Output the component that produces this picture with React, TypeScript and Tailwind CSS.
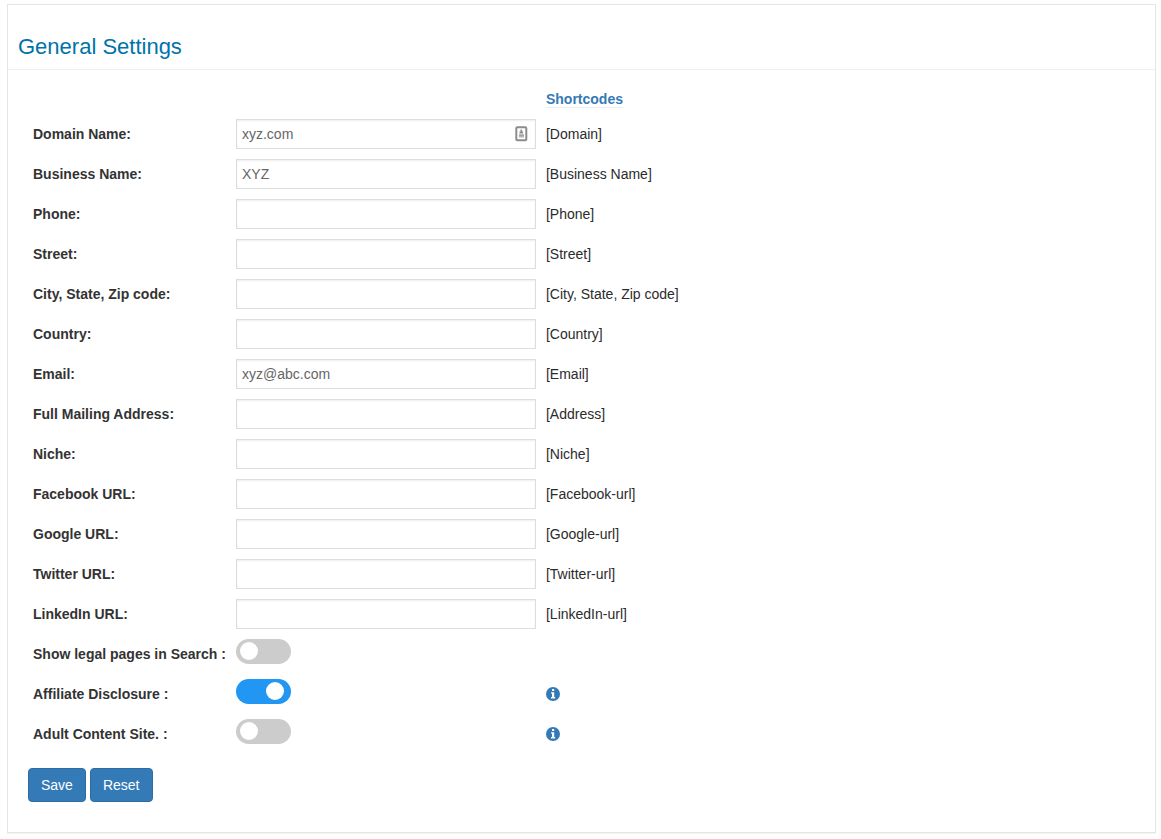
import { useState } from 'react'

const fields = [
  { id: 'domain', label: 'Domain Name:', value: 'xyz.com', shortcode: '[Domain]', autofill: true },
  { id: 'business', label: 'Business Name:', value: 'XYZ', shortcode: '[Business Name]' },
  { id: 'phone', label: 'Phone:', value: '', shortcode: '[Phone]' },
  { id: 'street', label: 'Street:', value: '', shortcode: '[Street]' },
  { id: 'city', label: 'City, State, Zip code:', value: '', shortcode: '[City, State, Zip code]' },
  { id: 'country', label: 'Country:', value: '', shortcode: '[Country]' },
  { id: 'email', label: 'Email:', value: 'xyz@abc.com', shortcode: '[Email]' },
  { id: 'address', label: 'Full Mailing Address:', value: '', shortcode: '[Address]' },
  { id: 'niche', label: 'Niche:', value: '', shortcode: '[Niche]' },
  { id: 'facebook', label: 'Facebook URL:', value: '', shortcode: '[Facebook-url]' },
  { id: 'google', label: 'Google URL:', value: '', shortcode: '[Google-url]' },
  { id: 'twitter', label: 'Twitter URL:', value: '', shortcode: '[Twitter-url]' },
  { id: 'linkedin', label: 'LinkedIn URL:', value: '', shortcode: '[LinkedIn-url]' },
]

const toggles = [
  { id: 'legal', label: 'Show legal pages in Search :', on: false, info: false },
  { id: 'affiliate', label: 'Affiliate Disclosure :', on: true, info: true },
  { id: 'adult', label: 'Adult Content Site. :', on: false, info: true },
]

function AutofillIcon() {
  return (
    <svg className="absolute right-2 top-[7px]" width="13" height="16" viewBox="0 0 13 16" aria-hidden="true">
      <rect x="1.3" y="1.3" width="10" height="13" rx="1" fill="#fff" stroke="#8c8c8c" strokeWidth="2" />
      <path d="M5.500 3.500h1.600v2h1v2H4.500v-2h1z" fill="#8c8c8c" />
      <path d="M4 8.500h5v3H4z" fill="#b5b5b5" />
      <path d="M4 9h5" stroke="#9a9a9a" strokeWidth="1" />
    </svg>
  )
}

function InfoIcon() {
  return (
    <svg width="14" height="14" viewBox="0 0 14 14" aria-hidden="true">
      <circle cx="7" cy="7" r="7" fill="#337ab7" />
      <path d="M6 2h2.200v2H6zM5 5.200h3.200V10H9.200v1.500H5V10h1V6.600H5z" fill="#fff" />
    </svg>
  )
}

function Switch({ id, defaultOn }: { id: string; defaultOn: boolean }) {
  const [on, setOn] = useState(defaultOn)

  return (
    <span className={`flex h-[25px] w-[55px] rounded-full px-1 pt-[3px] ${on ? 'bg-[#2196f3]' : 'bg-[#ccc]'}`}>
      <input
        id={id}
        type="checkbox"
        role="switch"
        checked={on}
        onChange={(e) => setOn(e.target.checked)}
        className="h-[18px] w-full cursor-pointer appearance-none before:block before:size-[18px] before:rounded-full before:bg-white checked:before:translate-x-[26px]"
      />
    </span>
  )
}

export default function App() {
  return (
    <main className="bg-white pt-1 pr-[5px] pb-1.5 pl-[7px] font-['Liberation_Sans',Arial,sans-serif] text-sm leading-5 text-[#333]">
      <form
        className="border border-[#e5e5e5] bg-white shadow-[0_1px_1px_rgba(0,0,0,0.04)]"
        onSubmit={(e) => e.preventDefault()}
      >
        <h1 className="border-b border-[#eee] px-2.5 pt-7 pb-2 text-[22px] leading-7 text-[#0073aa]">
          General Settings
        </h1>

        <div className="px-5 pt-3.5 pb-[30px]">
          <table className="border-collapse text-left">
            <thead>
              <tr>
                <td />
                <td />
                <th className="p-[5px]">
                  <a href="#shortcodes" className="border-b border-[#eee] text-[#337ab7]">
                    Shortcodes
                  </a>
                </th>
              </tr>
            </thead>
            <tbody>
              {fields.map((field) => (
                <tr key={field.id}>
                  <th className="p-[5px] whitespace-nowrap">
                    <label htmlFor={field.id}>{field.label}</label>
                  </th>
                  <td className="p-[5px]">
                    <div className="relative">
                      <input
                        id={field.id}
                        type="text"
                        defaultValue={field.value}
                        className="block h-[30px] w-[300px] border border-[#ddd] bg-white px-[5px] text-[#666] shadow-[inset_0_1px_2px_rgba(0,0,0,0.07)]"
                      />
                      {field.autofill && <AutofillIcon />}
                    </div>
                  </td>
                  <td className="p-[5px] whitespace-nowrap text-[#2b2b2b]">{field.shortcode}</td>
                </tr>
              ))}
              {toggles.map((toggle) => (
                <tr key={toggle.id} className="h-10">
                  <th className="p-[5px] whitespace-nowrap">
                    <label htmlFor={toggle.id}>{toggle.label}</label>
                  </th>
                  <td className="p-[5px] align-top">
                    <Switch id={toggle.id} defaultOn={toggle.on} />
                  </td>
                  <td className="p-[5px]">
                    {toggle.info && (
                      <a href={`#${toggle.id}-info`} aria-label="More information" className="block w-fit">
                        <InfoIcon />
                      </a>
                    )}
                  </td>
                </tr>
              ))}
            </tbody>
          </table>

          <div className="mt-3.5 flex gap-1">
            <button type="submit" className="rounded border border-[#2e6da4] bg-[#337ab7] px-3 py-1.5 text-white">
              Save
            </button>
            <button type="reset" className="rounded border border-[#2e6da4] bg-[#337ab7] px-3 py-1.5 text-white">
              Reset
            </button>
          </div>
        </div>
      </form>
    </main>
  )
}
